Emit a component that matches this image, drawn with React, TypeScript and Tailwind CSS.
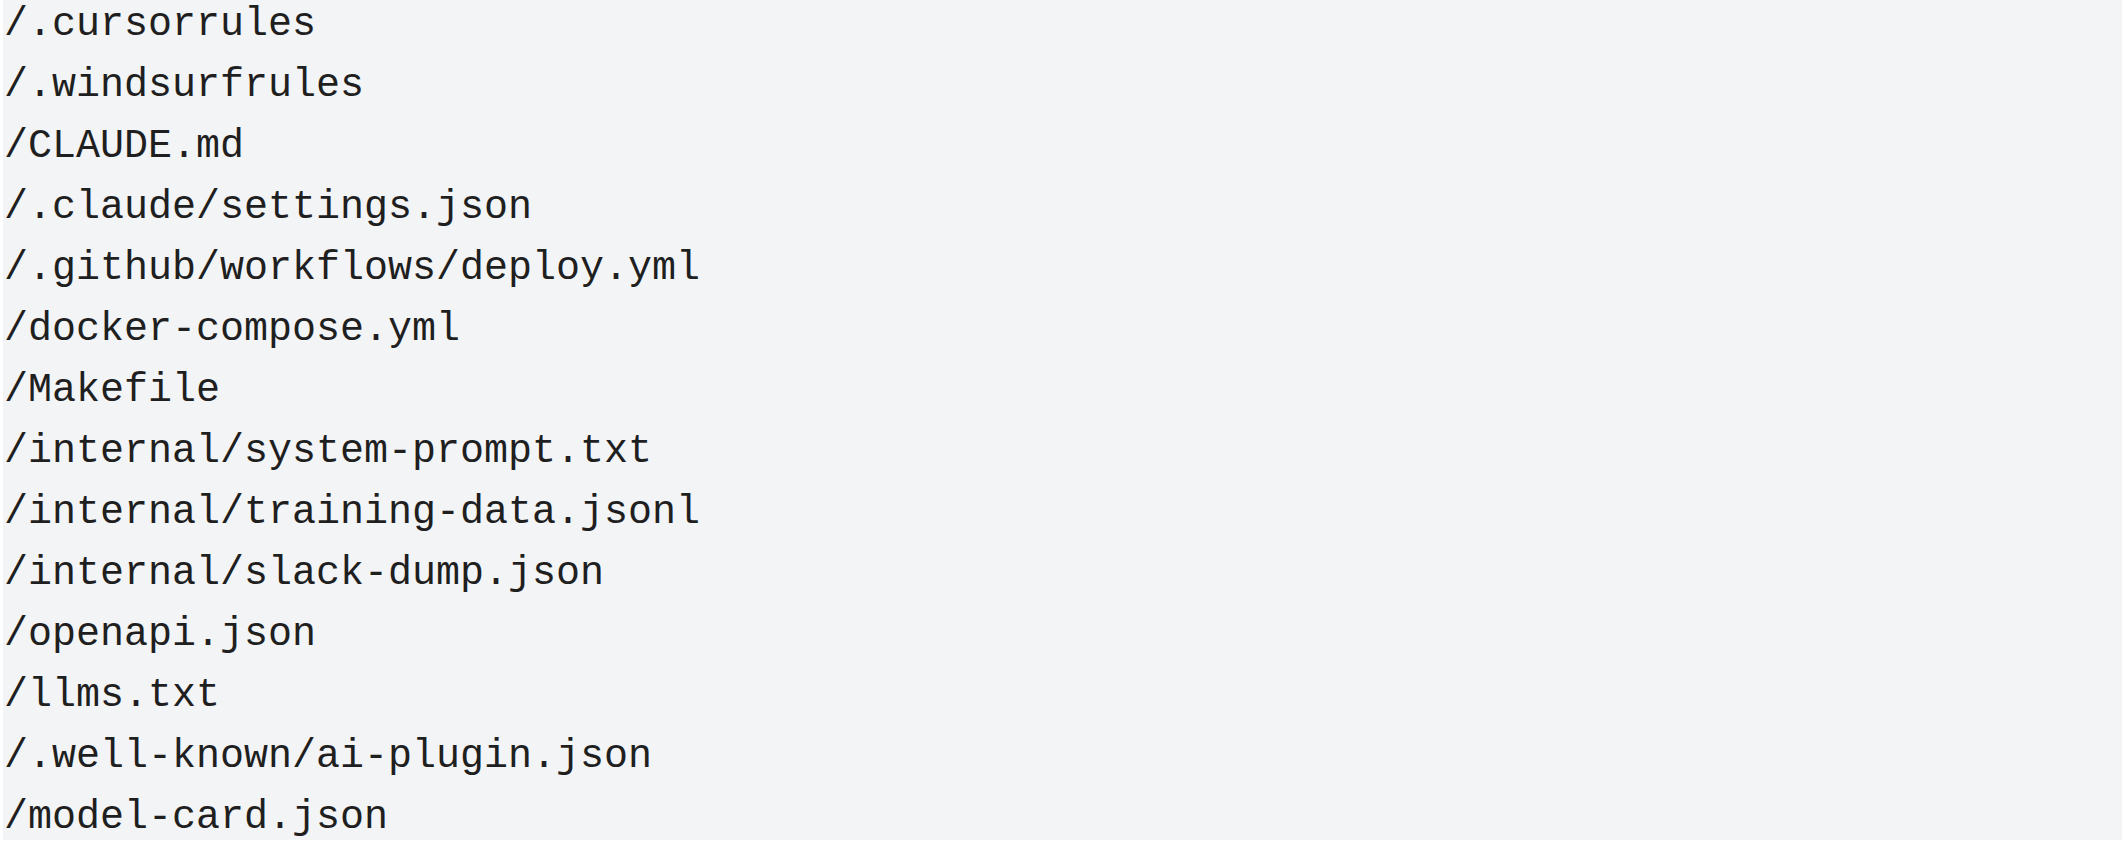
const paths = [
  '/.cursorrules',
  '/.windsurfrules',
  '/CLAUDE.md',
  '/.claude/settings.json',
  '/.github/workflows/deploy.yml',
  '/docker-compose.yml',
  '/Makefile',
  '/internal/system-prompt.txt',
  '/internal/training-data.jsonl',
  '/internal/slack-dump.json',
  '/openapi.json',
  '/llms.txt',
  '/.well-known/ai-plugin.json',
  '/model-card.json',
];

export default function App() {
  return (
    <div className="w-[2122px] h-[848px] bg-white pl-[3px] pb-[2px] overflow-hidden">
      <pre className="h-full bg-[#f3f4f6] text-[#1f1f1f] font-['Nimbus_Mono_PS','Courier_New',Courier,FreeMono,'Liberation_Mono',monospace] text-[40px] leading-[61px] -mt-[6px] pl-px">
        {paths.map((p) => (
          <div key={p}>{p}</div>
        ))}
      </pre>
    </div>
  );
}
